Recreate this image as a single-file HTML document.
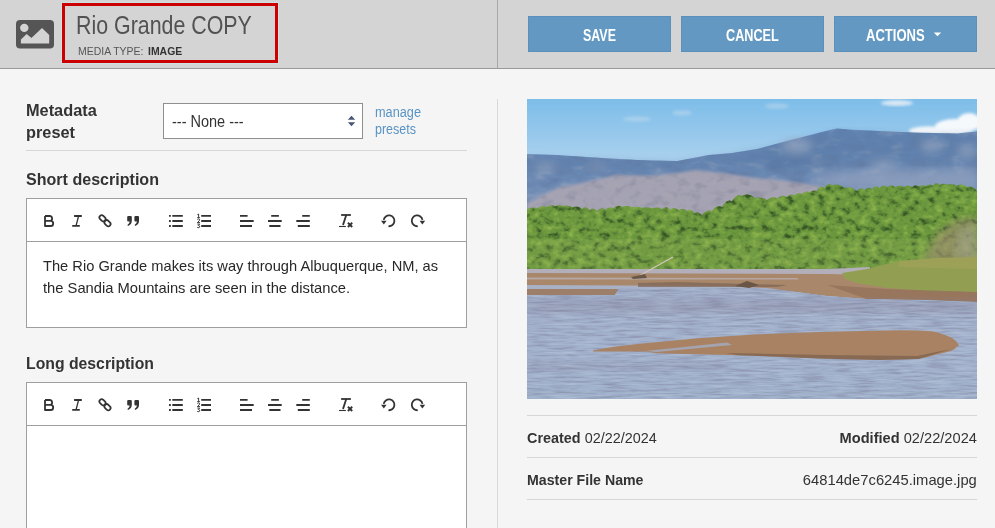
<!DOCTYPE html>
<html><head><meta charset="utf-8">
<style>
*{margin:0;padding:0;box-sizing:border-box}
html,body{width:995px;height:528px;overflow:hidden;background:#f5f5f5;font-family:"Liberation Sans",sans-serif;color:#333}
.a{position:absolute;white-space:nowrap;line-height:1}
.sx{transform-origin:0 0}
#hdr{position:absolute;left:0;top:0;width:995px;height:69px;background:#d4d4d4;border-bottom:1px solid #9a9a9a}
#vd1{position:absolute;left:497px;top:0;width:1px;height:68px;background:#a8a8a8}
#vd2{position:absolute;left:497px;top:99px;width:1px;height:429px;background:#d9d9d9}
#redbox{position:absolute;left:62px;top:3px;width:216px;height:60px;border:3px solid #cc0000;box-shadow:0 0 0 1px #cfe0e3}
.btn{position:absolute;top:16px;width:143px;height:36px;background:#6298c2;box-shadow:inset 0 0 0 1px #5a90bd}
.box{position:absolute;left:26px;width:441px;background:#fff;border:1px solid #9e9e9e}
.tbb{position:absolute;left:27px;width:439px;height:1px;background:#9e9e9e}
.hr{position:absolute;height:1px;background:#d6d6d6}
</style></head><body>
<div id="hdr"></div>
<div id="vd1"></div>
<svg class="a" style="left:16px;top:20px" width="38" height="29" viewBox="0 0 38 29">
  <rect x="0" y="0" width="38" height="28.5" rx="4" fill="#555"/>
  <circle cx="8.3" cy="7.9" r="4.2" fill="#d4d4d4"/>
  <path d="M4.9 23.6 L4.9 19.5 L10.7 14.1 L15.4 18 L26 8.1 L33.2 15.1 L33.2 23.6 Z" fill="#d4d4d4"/>
</svg>
<div id="redbox"></div>
<div class="a sx" style="left:76px;top:13px;font-size:25px;color:#525252;transform:scaleX(0.855);">Rio Grande COPY</div>

<div class="a sx" style="left:77.5px;top:45.5px;font-size:11px;color:#555;transform:scaleX(0.95);">MEDIA TYPE:</div>

<div class="a sx" style="left:148px;top:45.5px;font-size:11px;color:#333;font-weight:bold;transform:scaleX(0.95);">IMAGE</div>

<div class="btn" style="left:528px"></div>
<div class="btn" style="left:681px"></div>
<div class="btn" style="left:834px"></div>
<div class="a sx" style="left:583px;top:28px;font-size:16px;color:#fff;font-weight:bold;transform:scaleX(0.778);">SAVE</div>

<div class="a sx" style="left:725.5px;top:28px;font-size:16px;color:#fff;font-weight:bold;transform:scaleX(0.79);">CANCEL</div>

<div class="a sx" style="left:866px;top:28px;font-size:16px;color:#fff;font-weight:bold;transform:scaleX(0.815);">ACTIONS</div>

<svg class="a" style="left:933px;top:32px" width="9" height="5" viewBox="0 0 9 5"><path d="M0.8 0.5 h7.4 L4.5 4.3 z" fill="#fff"/></svg>

<div class="a sx" style="left:26px;top:102px;font-size:17px;color:#333;font-weight:bold;transform:scaleX(0.96);">Metadata</div>

<div class="a sx" style="left:26px;top:124px;font-size:17px;color:#333;font-weight:bold;transform:scaleX(0.96);">preset</div>

<div class="a" style="left:163px;top:103px;width:200px;height:36px;background:#fff;border:1px solid #8f8f8f"></div>
<div class="a sx" style="left:171.5px;top:114px;font-size:16px;color:#333;transform:scaleX(0.906);">--- None ---</div>

<svg class="a" style="left:346.5px;top:115px" width="9" height="12" viewBox="0 0 9 12"><path d="M4.5 0.8 L8.2 4.8 H0.8 Z M4.5 11.2 L8.2 7.2 H0.8 Z" fill="#4a5676"/></svg>
<div class="a sx" style="left:375px;top:105px;font-size:14px;color:#5a94c4;transform:scaleX(0.91);">manage</div>

<div class="a sx" style="left:375px;top:122px;font-size:14px;color:#5a94c4;transform:scaleX(0.893);">presets</div>

<div class="hr" style="left:26px;top:150px;width:441px"></div>

<div class="a sx" style="left:26px;top:171px;font-size:17px;color:#333;font-weight:bold;transform:scaleX(0.945);">Short description</div>

<div class="box" style="top:198px;height:130px"></div>
<div class="tbb" style="top:241px"></div>
<svg class="a" style="left:27px;top:199px" width="439" height="42" viewBox="27 199 439 42" fill="none" stroke="#333">
<g transform="translate(0,0)">
 <!-- B -->
 <path d="M45 216 H49.7 A2.4 2.4 0 0 1 49.7 220.8 H45 M45 220.8 H50.6 A2.6 2.6 0 0 1 50.6 226 H45 Z M45 216 V226" stroke-width="1.8" stroke-linejoin="round"/>
 <!-- I -->
 <path d="M74.1 216 H81.8 M72.2 225.9 H79.8" stroke-width="1.8"/>
 <path d="M78.5 216.4 L76.1 225.5" stroke-width="1.3"/>
 <!-- link -->
 <g stroke-width="1.7"><rect x="99.1" y="216" width="6.8" height="4.6" rx="2.3" transform="rotate(45 102.5 218.3)"/><rect x="104.1" y="220.9" width="6.8" height="4.6" rx="2.3" transform="rotate(45 107.5 223.2)"/></g>
 <!-- quote -->
 <g fill="#333" stroke="none">
 <path d="M127.2 217 Q127.2 216 128.2 216 H130.8 Q131.8 216 131.8 217 V221 Q131.8 224.5 128 225.9 L127.4 224.9 Q129.6 223.5 129.8 221.6 H128.2 Q127.2 221.6 127.2 220.6 Z"/>
 <path d="M134.4 217 Q134.4 216 135.4 216 H138 Q139 216 139 217 V221 Q139 224.5 135.2 225.9 L134.6 224.9 Q136.8 223.5 137 221.6 H135.4 Q134.4 221.6 134.4 220.6 Z"/>
 </g>
 <!-- bullets -->
 <g stroke-width="1.8"><path d="M172.3 215.9 H182.8 M172.3 221 H182.8 M172.3 226 H182.8"/><path d="M169 215.9 h1.8 M169 221 h1.8 M169 226 h1.8"/></g>
 <!-- numbered -->
 <g stroke-width="1.8"><path d="M201.2 215.9 H211 M201.2 221 H211 M201.2 226 H211"/></g>
 <g stroke-width="0.95"><path d="M197.4 214.6 L198.6 214 V217.6 M197.2 217.6 H199.9"/><path d="M197.3 219.4 Q198.5 218.5 199.5 219.2 Q200 220 199.1 220.9 L197.3 222.6 H200"/><path d="M197.3 224.1 H199.7 L198.3 225.5 Q200 225.7 199.8 226.9 Q199.3 228.1 197.2 227.5"/></g>
 <!-- align left -->
 <path d="M240 215.9 h7.6 M240 221 h13.7 M240 226 h12" stroke-width="1.8"/>
 <!-- align center -->
 <path d="M271.2 215.9 h7.7 M268 221 h13.7 M269.3 226 h11.2" stroke-width="1.8"/>
 <!-- align right -->
 <path d="M302.2 215.9 h7.6 M296.3 221 h13.5 M297.8 226 h12" stroke-width="1.8"/>
 <!-- Tx -->
 <path d="M341.1 215 H350.9" stroke-width="1.8"/>
 <path d="M346.1 215.5 L343.2 224.4" stroke-width="1.8" stroke-linecap="round"/>
 <path d="M339 226.5 H345.9" stroke-width="1.1"/>
 <path d="M347.9 222.8 L352.2 227 M352.2 222.8 L347.9 227" stroke-width="1.9"/>
 <!-- undo -->
 <path d="M388.5 226.2 A5.4 5.4 0 1 0 383.7 219.9" stroke-width="1.8"/>
 <path d="M381 220.8 H386.6 L383.8 224.6 Z" fill="#333" stroke="none"/>
 <!-- redo -->
 <path d="M417.7 226.2 A5.4 5.4 0 1 1 422.5 219.9" stroke-width="1.8"/>
 <path d="M419.6 220.8 H425.2 L422.4 224.6 Z" fill="#333" stroke="none"/>
</g></svg>
<div class="a sx" style="left:42.5px;top:258px;font-size:15px;color:#282828;transform:scaleX(0.977);">The Rio Grande makes its way through Albuquerque, NM, as</div>

<div class="a sx" style="left:42.5px;top:280px;font-size:15px;color:#282828;transform:scaleX(0.982);">the Sandia Mountains are seen in the distance.</div>


<div class="a sx" style="left:26px;top:355px;font-size:17px;color:#333;font-weight:bold;transform:scaleX(0.928);">Long description</div>

<div class="box" style="top:382px;height:160px"></div>
<div class="tbb" style="top:425px"></div>
<svg class="a" style="left:27px;top:383px" width="439" height="42" viewBox="27 383 439 42" fill="none" stroke="#333">
<g transform="translate(0,184)">
 <!-- B -->
 <path d="M45 216 H49.7 A2.4 2.4 0 0 1 49.7 220.8 H45 M45 220.8 H50.6 A2.6 2.6 0 0 1 50.6 226 H45 Z M45 216 V226" stroke-width="1.8" stroke-linejoin="round"/>
 <!-- I -->
 <path d="M74.1 216 H81.8 M72.2 225.9 H79.8" stroke-width="1.8"/>
 <path d="M78.5 216.4 L76.1 225.5" stroke-width="1.3"/>
 <!-- link -->
 <g stroke-width="1.7"><rect x="99.1" y="216" width="6.8" height="4.6" rx="2.3" transform="rotate(45 102.5 218.3)"/><rect x="104.1" y="220.9" width="6.8" height="4.6" rx="2.3" transform="rotate(45 107.5 223.2)"/></g>
 <!-- quote -->
 <g fill="#333" stroke="none">
 <path d="M127.2 217 Q127.2 216 128.2 216 H130.8 Q131.8 216 131.8 217 V221 Q131.8 224.5 128 225.9 L127.4 224.9 Q129.6 223.5 129.8 221.6 H128.2 Q127.2 221.6 127.2 220.6 Z"/>
 <path d="M134.4 217 Q134.4 216 135.4 216 H138 Q139 216 139 217 V221 Q139 224.5 135.2 225.9 L134.6 224.9 Q136.8 223.5 137 221.6 H135.4 Q134.4 221.6 134.4 220.6 Z"/>
 </g>
 <!-- bullets -->
 <g stroke-width="1.8"><path d="M172.3 215.9 H182.8 M172.3 221 H182.8 M172.3 226 H182.8"/><path d="M169 215.9 h1.8 M169 221 h1.8 M169 226 h1.8"/></g>
 <!-- numbered -->
 <g stroke-width="1.8"><path d="M201.2 215.9 H211 M201.2 221 H211 M201.2 226 H211"/></g>
 <g stroke-width="0.95"><path d="M197.4 214.6 L198.6 214 V217.6 M197.2 217.6 H199.9"/><path d="M197.3 219.4 Q198.5 218.5 199.5 219.2 Q200 220 199.1 220.9 L197.3 222.6 H200"/><path d="M197.3 224.1 H199.7 L198.3 225.5 Q200 225.7 199.8 226.9 Q199.3 228.1 197.2 227.5"/></g>
 <!-- align left -->
 <path d="M240 215.9 h7.6 M240 221 h13.7 M240 226 h12" stroke-width="1.8"/>
 <!-- align center -->
 <path d="M271.2 215.9 h7.7 M268 221 h13.7 M269.3 226 h11.2" stroke-width="1.8"/>
 <!-- align right -->
 <path d="M302.2 215.9 h7.6 M296.3 221 h13.5 M297.8 226 h12" stroke-width="1.8"/>
 <!-- Tx -->
 <path d="M341.1 215 H350.9" stroke-width="1.8"/>
 <path d="M346.1 215.5 L343.2 224.4" stroke-width="1.8" stroke-linecap="round"/>
 <path d="M339 226.5 H345.9" stroke-width="1.1"/>
 <path d="M347.9 222.8 L352.2 227 M352.2 222.8 L347.9 227" stroke-width="1.9"/>
 <!-- undo -->
 <path d="M388.5 226.2 A5.4 5.4 0 1 0 383.7 219.9" stroke-width="1.8"/>
 <path d="M381 220.8 H386.6 L383.8 224.6 Z" fill="#333" stroke="none"/>
 <!-- redo -->
 <path d="M417.7 226.2 A5.4 5.4 0 1 1 422.5 219.9" stroke-width="1.8"/>
 <path d="M419.6 220.8 H425.2 L422.4 224.6 Z" fill="#333" stroke="none"/>
</g></svg>

<div id="vd2"></div>
<svg class="a" style="left:527px;top:99px" width="450" height="300" viewBox="0 0 450 300">
<defs>
 <linearGradient id="sky" gradientUnits="userSpaceOnUse" x1="0" y1="0" x2="0" y2="62">
  <stop offset="0" stop-color="#7dbde9"/><stop offset="0.6" stop-color="#98c9ec"/><stop offset="1" stop-color="#acd2ee"/>
 </linearGradient>
 <linearGradient id="mtn" gradientUnits="userSpaceOnUse" x1="0" y1="30" x2="0" y2="120">
  <stop offset="0" stop-color="#6184b2"/><stop offset="0.5" stop-color="#6a89b4"/><stop offset="1" stop-color="#8498ba"/>
 </linearGradient>
 <linearGradient id="water" gradientUnits="userSpaceOnUse" x1="0" y1="190" x2="0" y2="300">
  <stop offset="0" stop-color="#9eabc6"/><stop offset="0.5" stop-color="#a2b1cc"/><stop offset="1" stop-color="#9eafca"/>
 </linearGradient>
 <filter id="treetex" x="0" y="0" width="1" height="1" color-interpolation-filters="sRGB">
  <feTurbulence type="fractalNoise" baseFrequency="0.12 0.15" numOctaves="3" seed="7" result="n"/>
  <feColorMatrix in="n" type="matrix" values="0 0 0 0 0.22  0 0 0 0 0.34  0 0 0 0 0.15  -4 0 0 0 1.8" result="dark"/>
  <feComposite in="dark" in2="SourceGraphic" operator="in" result="d2"/>
  <feColorMatrix in="n" type="matrix" values="0 0 0 0 0.55  0 0 0 0 0.70  0 0 0 0 0.30  3 0 0 0 -1.5" result="lite"/>
  <feComposite in="lite" in2="SourceGraphic" operator="in" result="l2"/>
  <feMerge><feMergeNode in="SourceGraphic"/><feMergeNode in="d2"/><feMergeNode in="l2"/></feMerge>
 </filter>
 <filter id="watertex" x="0" y="0" width="1" height="1" color-interpolation-filters="sRGB">
  <feTurbulence type="fractalNoise" baseFrequency="0.04 0.45" numOctaves="3" seed="11" result="n"/>
  <feColorMatrix in="n" type="matrix" values="0 0 0 0 0.53  0 0 0 0 0.54  0 0 0 0 0.64  -2.0 0 0 0 1.0" result="dark"/>
  <feComposite in="dark" in2="SourceGraphic" operator="in" result="d2"/>
  <feColorMatrix in="n" type="matrix" values="0 0 0 0 0.70  0 0 0 0 0.76  0 0 0 0 0.84  2.2 0 0 0 -1.1" result="lite"/>
  <feComposite in="lite" in2="SourceGraphic" operator="in" result="l2"/>
  <feMerge><feMergeNode in="SourceGraphic"/><feMergeNode in="d2"/><feMergeNode in="l2"/></feMerge>
 </filter>
 <filter id="mtntex" x="0" y="0" width="1" height="1" color-interpolation-filters="sRGB">
  <feTurbulence type="fractalNoise" baseFrequency="0.05 0.1" numOctaves="3" seed="5" result="n"/>
  <feColorMatrix in="n" type="matrix" values="0 0 0 0 0.38  0 0 0 0 0.48  0 0 0 0 0.64  -2 0 0 0 1.1" result="dark"/>
  <feComposite in="dark" in2="SourceGraphic" operator="in" result="d2"/>
  <feColorMatrix in="n" type="matrix" values="0 0 0 0 0.62  0 0 0 0 0.66  0 0 0 0 0.74  2 0 0 0 -1.15" result="lite"/>
  <feComposite in="lite" in2="SourceGraphic" operator="in" result="l2"/>
  <feMerge><feMergeNode in="SourceGraphic"/><feMergeNode in="d2"/><feMergeNode in="l2"/></feMerge>
 </filter>
 <filter id="bl"><feGaussianBlur stdDeviation="1.5"/></filter>
 <filter id="ftex" x="0" y="0" width="1" height="1" color-interpolation-filters="sRGB"><feTurbulence type="fractalNoise" baseFrequency="0.08 0.12" numOctaves="3" seed="9"/><feColorMatrix type="matrix" values="0 0 0 0 0.5  0 0 0 0 0.52  0 0 0 0 0.6  -3 0 0 0 1.5"/><feComposite in2="SourceGraphic" operator="in"/></filter>
 <filter id="bl3"><feGaussianBlur stdDeviation="4"/></filter>
 <filter id="bl2"><feGaussianBlur stdDeviation="0.6"/></filter>
</defs>
<rect width="450" height="300" fill="url(#sky)"/>
<g fill="#c6dcee" opacity="0.5" filter="url(#bl)"><ellipse cx="110" cy="20" rx="14" ry="2.5"/><ellipse cx="155" cy="14" rx="10" ry="2.5"/><ellipse cx="250" cy="7" rx="12" ry="2.5"/></g>
<!-- cloud -->
<g fill="#f6f9fc" filter="url(#bl)"><ellipse cx="428" cy="28" rx="20" ry="8"/><ellipse cx="402" cy="32" rx="20" ry="4.5"/><ellipse cx="442" cy="23" rx="12" ry="9"/></g>
<ellipse cx="370" cy="4" rx="16" ry="3" fill="#d8e8f4" filter="url(#bl)"/>
<!-- mountains -->
<g filter="url(#mtntex)">
<path d="M0 55 L30 56 L75 59 L110 61 L150 62 L182 56 L205 54 L230 50 L260 42 L300 31.7 L310 29.4 L325 30.7 L385 33.5 L430 34.4 L450 32.6 L450 130 L0 130 Z" fill="url(#mtn)"/>
</g>
<path d="M0 60 L75 62 L150 64 L205 57 L260 46 L310 33 L385 37 L450 36 L450 60 L380 64 L300 60 L240 70 L180 66 L120 72 L60 70 L0 74 Z" fill="#5a7aa6" opacity="0.45" filter="url(#bl3)"/>
<g filter="url(#bl3)">
<ellipse cx="270" cy="47" rx="15" ry="7" fill="#98a6c0" opacity="0.7"/>
<ellipse cx="405" cy="47" rx="12" ry="5" fill="#9eaac2" opacity="0.7"/>
<ellipse cx="357" cy="66" rx="15" ry="5" fill="#98a6c0" opacity="0.6"/>
<ellipse cx="440" cy="52" rx="10" ry="7" fill="#9aa8c2" opacity="0.6"/>
<ellipse cx="18" cy="69" rx="12" ry="4" fill="#a3adc4" opacity="0.6"/>
<ellipse cx="70" cy="68" rx="10" ry="3.5" fill="#9ba8c2" opacity="0.5"/>
<path d="M239 62 L305 60 L300 66 L240 68 Z" fill="#4c6a96" opacity="0.5"/>
<path d="M280 74 L450 70 L450 88 L300 90 Z" fill="#8c9dbc" opacity="0.5"/>
</g>
<path d="M0 104 L30 89 L60 83 L90 75.7 L120 77 L150.7 74 L169 71 L196 74 L226 78.7 L256 81.7 L286 86 L300 89 L330 100 L340 118 L0 125 Z" fill="#aaa5b3" opacity="0.92" filter="url(#bl)"/>
<path d="M0 104 L30 89 L60 83 L90 75.7 L120 77 L150.7 74 L169 71 L196 74 L226 78.7 L256 81.7 L286 86 L300 89 L330 100 L340 118 L0 125 Z" fill="#000" opacity="0.5" filter="url(#ftex)"/>
<path d="M290 78 L340 70 L400 72 L450 70 L450 100 L400 96 L330 92 Z" fill="#8fa0bf" opacity="0.6" filter="url(#bl3)"/>
<!-- trees -->
<g filter="url(#treetex)">
<path d="M0 175 L0 110.4 Q5.0 107.1 10.0 109.2 Q15.0 106.2 20.0 108.0 Q24.0 105.0 28.0 107.5 Q32.0 105.1 36.0 107.0 Q40.8 105.3 45.5 108.5 Q50.2 106.0 55.0 110.0 Q58.8 106.2 62.5 111.0 Q66.2 107.5 70.0 112.0 Q74.2 107.3 78.3 110.7 Q82.5 107.3 86.7 109.3 Q90.8 105.2 95.0 108.0 Q100.0 105.8 105.0 108.5 Q110.0 106.6 115.0 109.0 Q120.0 107.2 125.0 109.5 Q130.0 107.5 135.0 110.0 Q139.2 106.2 143.3 110.7 Q147.5 107.1 151.7 111.3 Q155.8 107.8 160.0 112.0 Q163.8 108.5 167.5 114.0 Q171.2 112.0 175.0 116.0 Q180.0 109.7 185.0 112.0 Q190.0 104.9 195.0 108.0 Q200.0 99.2 205.0 102.5 Q210.0 93.4 215.0 97.0 Q221.5 93.3 228.0 99.0 Q234.0 97.3 240.0 101.0 Q245.0 96.5 250.0 99.5 Q255.0 94.8 260.0 98.0 Q263.8 93.7 267.5 96.5 Q271.2 93.1 275.0 95.0 Q278.8 90.8 282.5 93.5 Q286.2 90.3 290.0 92.0 Q293.8 85.4 297.5 89.2 Q301.2 82.7 305.0 86.4 Q311.5 83.5 318.0 89.0 Q324.0 86.7 330.0 92.0 Q333.8 87.2 337.5 91.0 Q341.2 87.1 345.0 90.0 Q348.8 85.3 352.5 89.0 Q356.2 84.4 360.0 88.0 Q364.2 85.2 368.3 88.0 Q372.5 85.5 376.7 88.0 Q380.8 85.0 385.0 88.0 Q388.5 84.9 392.0 87.5 Q395.5 85.1 399.0 87.0 Q402.5 84.2 406.0 86.5 Q409.5 82.5 413.0 86.0 Q416.5 83.9 420.0 85.5 Q425.0 83.9 430.0 86.8 Q435.0 83.7 440.0 88.0 Q445.0 85.8 450.0 92.0 L450 175 Z" fill="#6a963d"/>
</g>
<path d="M0 140 L450 140 L450 172 L0 172 Z" fill="#98b060" opacity="0.18"/>
<path d="M395 165 L410 135 L428 122 L450 118 L450 165 Z" fill="#a08a72" opacity="0.6" filter="url(#bl3)"/>
<path d="M428 160 L432 132 L450 124 L450 160 Z" fill="#aab0a4" opacity="0.35" filter="url(#bl3)"/>
<!-- far water strip -->
<path d="M0 170 L300 170 L343 168 L343 178 L0 177 Z" fill="#b3afba" filter="url(#bl2)"/>
<!-- sand bands -->
<path d="M0 174 L300 175 L343 176 L450 177 L450 203 L400 201 L340 200 L300 197 L260 192 L200 188 L100 187 L0 187 Z" fill="#a8876b" filter="url(#bl2)"/>
<path d="M0 178.5 L270 179 L272 180.5 L0 180.5 Z" fill="#bab0b2" opacity="0.8" filter="url(#bl2)"/>
<path d="M0 186 L200 187 L240 189 L100 190 L0 190 Z" fill="#a9b1c6" filter="url(#bl2)"/>
<path d="M0 190 L92 190 L88 196 L0 196.5 Z" fill="#9c7e69" filter="url(#bl2)"/>
<path d="M111 184 L150 183 L260 186 L250 188 L111 188 Z" fill="#7d6556" opacity="0.7" filter="url(#bl2)"/>
<!-- grass -->
<path d="M315 174 L340 170 L372 162 L410 159 L450 158 L450 193 L400 192 L360 189 L330 184 L318 180 Z" fill="#929f52" filter="url(#bl2)"/>
<path d="M372 162 L410 159 L450 158 L450 170 L372 168 Z" fill="#a8a45c" opacity="0.5" filter="url(#bl2)"/>
<path d="M300 186 L360 190 L450 193 L450 203 L400 201 L340 200 Z" fill="#8c6c56" opacity="0.6" filter="url(#bl2)"/>
<!-- driftwood -->
<path d="M112 177 L146 158" stroke="#cfc6b8" stroke-width="1.4"/>
<path d="M104 178 L118 175 L120 179 L106 180 Z" fill="#6a5646"/>
<path d="M208 187 L220 182 L232 186 L222 189 Z" fill="#6a5646"/>
<!-- water -->
<g filter="url(#watertex)">
<path d="M0 196 L88 196 L92 189.5 L240 189 L300 197 L340 200 L450 203 L450 300 L0 300 Z" fill="url(#water)"/>
</g>
<rect x="0" y="200" width="450" height="14" fill="#857f98" opacity="0.28" filter="url(#bl3)"/>
<rect x="0" y="262" width="200" height="10" fill="#857f98" opacity="0.22" filter="url(#bl3)"/>
<!-- lower sand bar -->
<path d="M66 251.4 Q90 247 110.3 245 L170.6 239.3 L231 235.3 L291 232.9 L371.6 231.3 Q405 231 411.8 234 Q428 238 432 246 Q428 250 424 252 L391.7 260 L351.5 261 L291 259.4 L210.8 256.2 L130.4 254.2 L118 252.5 L66 252.5 Z" fill="#a88262" filter="url(#bl2)"/>
<path d="M118 252 L200 243.5 L205 246 L130 253 Z" fill="#a3adc4" opacity="0.8" filter="url(#bl2)"/>
<path d="M200 254 L300 256 L390 257 L424 250 L391.7 260 L351.5 261 L291 259.4 L210.8 256.2 Z" fill="#6e5646" opacity="0.55" filter="url(#bl2)"/>
</svg>

<div class="hr" style="left:527px;top:415px;width:450px"></div>
<div class="hr" style="left:527px;top:457px;width:450px"></div>
<div class="hr" style="left:527px;top:499px;width:450px"></div>
<div class="a sx" style="left:527px;top:430px;font-size:15px;color:#333;transform:scaleX(0.96);"><b>Created</b> 02/22/2024</div>

<div class="a" style="right:18px;top:430px;font-size:15px;color:#333;transform:scaleX(0.975);transform-origin:100% 0"><b>Modified</b> 02/22/2024</div>

<div class="a sx" style="left:527px;top:472px;font-size:15px;color:#333;transform:scaleX(0.944);"><b>Master File Name</b></div>

<div class="a" style="right:18px;top:472px;font-size:15px;color:#333;transform:scaleX(0.984);transform-origin:100% 0">64814de7c6245.image.jpg</div>

</body></html>
